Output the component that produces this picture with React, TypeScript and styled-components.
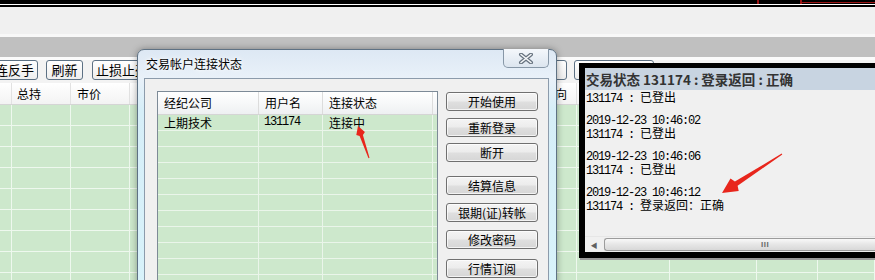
import * as React from 'react';
import styled, {createGlobalStyle} from 'styled-components';

const GlobalStyle = createGlobalStyle`
    html, body {
        margin: 0;
        padding: 0;
        background: #cde8cc;
    }
    body {
        width: 875px;
        height: 280px;
        overflow: hidden;
        font-family: "Noto Sans CJK SC", "Noto Sans", sans-serif;
        color: #000;
    }
`;

const Screen = styled.div`
    position: relative;
    width: 875px;
    height: 280px;
    overflow: hidden;
    display: flex;
    flex-direction: column;
    background: #cde8cc;
`;

const TopBand = styled.div`
    flex: none;
    height: 7px;
    background:
        linear-gradient(#9b1414, #9b1414) 757px 0 / 2px 4px no-repeat,
        linear-gradient(#9b1414, #9b1414) 800px 0 / 2px 4px no-repeat,
        linear-gradient(#9b1414, #9b1414) 800px 2px / 75px 1px no-repeat,
        linear-gradient(to bottom, #000 0 4px, #fff 4px 5px, #000 5px 7px);
`;

const MenuStrip = styled.div`
    flex: none;
    height: 27px;
    background: #f0f0f0;
    border-bottom: 3px solid #f8f8f8;
`;

const GrayBand = styled.div`
    flex: none;
    height: 20px;
    background: #c0c0c0;
`;

const MainWindow = styled.div`
    flex: 1;
    display: flex;
    flex-direction: column;
    overflow: hidden;
`;

const Toolbar = styled.div`
    flex: none;
    height: 26px;
    box-sizing: border-box;
    padding-top: 3px;
    display: flex;
    gap: 8px;
    background: linear-gradient(to bottom, #fbfbfb 0 3px, #f3f3f3 3px);
    overflow: hidden;
`;

const ToolButton = styled.div<{$w: number; $lead?: number}>`
    flex: none;
    width: ${(p) => p.$w}px;
    margin-left: ${(p) => p.$lead ?? 0}px;
    height: 20px;
    box-sizing: border-box;
    border: 1px solid #5d7184;
    border-radius: 3px;
    background: linear-gradient(to bottom, #ffffff, #eeeeee);
    font-size: 13px;
    line-height: 18px;
    text-align: center;
    white-space: nowrap;
    overflow: hidden;
`;

const cols = '12px 59px 59px 70px 70px 70px 70px 70px 73px 24px 93px 87px 61px 1fr';

const HeaderRow = styled.div`
    flex: none;
    display: grid;
    grid-template-columns: ${cols};
    height: 22px;
    box-sizing: border-box;
    background: linear-gradient(to bottom, #ffffff, #f3f3f3);
    border-bottom: 1px solid #d5d5d5;
`;

const HeaderCell = styled.div<{$pad?: number}>`
    border-right: 1px solid #e2e2e2;
    padding-left: ${(p) => p.$pad ?? 5}px;
    font-size: 12px;
    line-height: 21px;
    white-space: nowrap;
    overflow: hidden;
`;

const GridRow = styled.div`
    flex: none;
    display: grid;
    grid-template-columns: ${cols};
    height: 21px;
`;

const GridCell = styled.div`
    border-right: 1px solid #eef8ee;
    border-bottom: 1px solid #eef8ee;
    background: #cde8cc;
`;

/* the account dialog, a window lying on the desktop */
const Dialog = styled.div`
    position: absolute;
    left: 137px;
    top: 49px;
    width: 420px;
    height: 260px;
    box-sizing: border-box;
    border: 1px solid #5f7284;
    border-radius: 7px 7px 0 0;
    background: linear-gradient(to bottom, #dde8f4 0, #e9f1f9 28px, #d6eef8 60px, #d8f3fb 100%);
    box-shadow: 0 0 7px rgba(0, 0, 0, 0.35);
    padding: 0 7px 0 6px;
    display: flex;
    flex-direction: column;
`;

const DialogTitle = styled.div`
    flex: none;
    height: 28px;
    padding-left: 2px;
    font-size: 12px;
    line-height: 28px;
    color: #000;
    text-shadow: 0 0 6px #fff, 0 0 3px #fff;
`;

const CloseButton = styled.div`
    position: absolute;
    top: -1px;
    right: 7px;
    width: 46px;
    height: 19px;
    box-sizing: border-box;
    border: 1px solid #8797a7;
    border-top: none;
    border-radius: 0 0 5px 5px;
    background: linear-gradient(to bottom, #f4f7fb, #dce5ef);
    display: flex;
    align-items: center;
    justify-content: center;
`;

const Client = styled.div`
    flex: 1;
    display: flex;
    gap: 8px;
    box-sizing: border-box;
    background: #f0f0f0;
    border: 1px solid #8c9bab;
    border-bottom: none;
    padding: 12px 11px 0 12px;
`;

const ListView = styled.div`
    flex: none;
    width: 281px;
    box-sizing: border-box;
    border: 1px solid #7d8a97;
    border-bottom: none;
    background: #cde8cc;
    display: flex;
    flex-direction: column;
    overflow: hidden;
`;

const listCols = '101px 64px 110px 1fr';

const ListHeader = styled.div`
    flex: none;
    display: grid;
    grid-template-columns: ${listCols};
    height: 23px;
    box-sizing: border-box;
    background: linear-gradient(to bottom, #ffffff 0, #f7f8f9 50%, #eef0f2 100%);
    border-bottom: 1px solid #d5d5d5;
`;

const ListHeaderCell = styled.div`
    border-right: 1px solid #dcdcdc;
    padding-left: 6px;
    font-size: 12px;
    line-height: 22px;
    white-space: nowrap;
`;

const ListRow = styled.div`
    flex: none;
    display: grid;
    grid-template-columns: ${listCols};
    height: 16px;
`;

const ListCell = styled.div<{$mono?: boolean}>`
    border-right: 1px solid #eaf5ea;
    border-bottom: 1px solid #eaf5ea;
    padding-left: ${(p) => (p.$mono ? 5 : 6)}px;
    font-family: ${(p) => (p.$mono ? '"Liberation Mono", monospace' : '"Noto Sans CJK SC", sans-serif')};
    font-size: 12px;
    letter-spacing: ${(p) => (p.$mono ? '-1.2px' : '0')};
    line-height: 15px;
    white-space: nowrap;
`;

const ButtonColumn = styled.div`
    flex: none;
    width: 92px;
    display: flex;
    flex-direction: column;
`;

const DlgButton = styled.div<{$gap: number}>`
    flex: none;
    margin-top: ${(p) => p.$gap}px;
    height: 19px;
    box-sizing: border-box;
    border: 1px solid #707070;
    border-radius: 3px;
    background: linear-gradient(to bottom, #f4f4f4 0, #ececec 48%, #dfdfdf 52%, #d6d6d6 100%);
    box-shadow: inset 0 0 0 1px rgba(255, 255, 255, 0.7);
    font-size: 12px;
    line-height: 17px;
    text-align: center;
    white-space: nowrap;
`;

/* the trade status window */
const StatusWin = styled.div`
    position: absolute;
    left: 579px;
    top: 63px;
    width: 300px;
    height: 195px;
    box-sizing: border-box;
    border-style: solid;
    border-color: #000;
    border-width: 5px 0 6px 6px;
    box-shadow: 1px 2px 0 #9a9a9a;
    background: #f0f0f0;
    display: flex;
    flex-direction: column;
`;

const StatusTitle = styled.div`
    flex: none;
    height: 22px;
    padding-left: 1px;
    background: #c8d4e1;
    font-size: 13.5px;
    font-weight: bold;
    line-height: 22px;
    color: #333;
    white-space: nowrap;
`;

const StatusBody = styled.div`
    flex: 1;
    padding: 1px 0 0 1px;
    overflow: hidden;
`;

const LogLine = styled.div`
    height: 12px;
    font-family: "Liberation Mono", monospace;
    font-size: 12px;
    letter-spacing: -1.2px;
    line-height: 12px;
    white-space: pre;
`;

const Zh = styled.span`
    font-family: "Noto Sans CJK SC", sans-serif;
    letter-spacing: 0;
    line-height: 12px;
`;

const HScroll = styled.div`
    flex: none;
    height: 16px;
    display: flex;
    background: #f0f0f0;
    border-top: 1px solid #e6e6e6;
    box-sizing: border-box;
`;

const ScrollArrow = styled.div`
    flex: none;
    width: 18px;
    display: flex;
    align-items: center;
    justify-content: center;
    font-size: 7px;
    color: #606060;
`;

const ScrollThumb = styled.div`
    flex: 1;
    margin: 1px 0 1px 1px;
    box-sizing: border-box;
    border: 1px solid #9c9c9c;
    border-right: none;
    border-radius: 3px 0 0 3px;
    background: linear-gradient(to bottom, #f8f8f8, #e6e6e6 50%, #d8d8d8);
    padding-left: 156px;
    display: flex;
    align-items: center;
    font-family: "Liberation Sans", sans-serif;
    font-size: 8px;
    font-weight: bold;
    letter-spacing: 0.5px;
    color: #6a6a6a;
`;

const Overlay = styled.svg`
    position: absolute;
    left: 0;
    top: 0;
    pointer-events: none;
`;

const arrowPoints = (
    x1: number, y1: number, x2: number, y2: number,
    head: number, headW: number, neckW: number, tailW: number
) => {
    const dx = x2 - x1;
    const dy = y2 - y1;
    const len = Math.hypot(dx, dy);
    const ux = dx / len;
    const uy = dy / len;
    const px = -uy;
    const py = ux;
    const bx = x2 - ux * head;
    const by = y2 - uy * head;
    const p = (x: number, y: number) => `${x.toFixed(1)},${y.toFixed(1)}`;
    return [
        p(x1 + (px * tailW) / 2, y1 + (py * tailW) / 2),
        p(bx + (px * neckW) / 2, by + (py * neckW) / 2),
        p(bx + ux * 2 + (px * headW) / 2, by + uy * 2 + (py * headW) / 2),
        p(x2, y2),
        p(bx + ux * 2 - (px * headW) / 2, by + uy * 2 - (py * headW) / 2),
        p(bx - (px * neckW) / 2, by - (py * neckW) / 2),
        p(x1 - (px * tailW) / 2, y1 - (py * tailW) / 2),
    ].join(' ');
};

const headers = ['', '总持', '市价', '', '', '', '', '', '', '向', '', '', '', ''];

// buttons behind the dialog carry no visible label
const toolButtons: Array<{label: string; w: number; lead?: number}> = [
    {label: '连反手', w: 47, lead: -9},
    {label: '刷新', w: 37},
    {label: '止损止盈', w: 60, lead: 1},
    {label: '', w: 80},
    {label: '', w: 80},
    {label: '', w: 80},
    {label: '', w: 70},
    {label: '', w: 65},
    {label: '', w: 80, lead: -1},
];

const dialogButtons = [
    {label: '开始使用', gap: 1},
    {label: '重新登录', gap: 7},
    {label: '断开', gap: 6},
    {label: '结算信息', gap: 14},
    {label: '银期(证)转帐', gap: 8},
    {label: '修改密码', gap: 8},
    {label: '行情订阅', gap: 10},
];

const logLines: Array<[string, string] | null> = [
    ['131174 : ', '已登出'],
    null,
    ['2019-12-23 10:46:02', ''],
    ['131174 : ', '已登出'],
    null,
    ['2019-12-23 10:46:06', ''],
    ['131174 : ', '已登出'],
    null,
    ['2019-12-23 10:46:12', ''],
    ['131174 : ', '登录返回：正确'],
];

const App: React.FC = () => {
    return (
        <Screen>
            <GlobalStyle />
            <TopBand />
            <MenuStrip />
            <GrayBand />
            <MainWindow>
                <Toolbar>
                    {toolButtons.map((b, i) => (
                        <ToolButton key={i} $w={b.w} $lead={b.lead}>
                            {b.label}
                        </ToolButton>
                    ))}
                </Toolbar>
                <HeaderRow>
                    {headers.map((h, i) => (
                        <HeaderCell key={i} $pad={i === 9 ? 2 : i === 2 ? 6 : 5}>
                            {h}
                        </HeaderCell>
                    ))}
                </HeaderRow>
                {Array.from({length: 9}).map((_, r) => (
                    <GridRow key={r}>
                        {headers.map((_, c) => (
                            <GridCell key={c} />
                        ))}
                    </GridRow>
                ))}
            </MainWindow>

            <Dialog>
                <DialogTitle>交易帐户连接状态</DialogTitle>
                <CloseButton>
                    <svg width="16" height="11" viewBox="0 0 16 11">
                        <path d="M3 1.5 L13 9.5 M13 1.5 L3 9.5" stroke="#66727f" strokeWidth="4" strokeLinecap="round" />
                        <path d="M3 1.5 L13 9.5 M13 1.5 L3 9.5" stroke="#f6f8fa" strokeWidth="1.6" strokeLinecap="round" />
                    </svg>
                </CloseButton>
                <Client>
                    <ListView>
                        <ListHeader>
                            <ListHeaderCell>经纪公司</ListHeaderCell>
                            <ListHeaderCell>用户名</ListHeaderCell>
                            <ListHeaderCell>连接状态</ListHeaderCell>
                            <ListHeaderCell />
                        </ListHeader>
                        {Array.from({length: 11}).map((_, r) => (
                            <ListRow key={r}>
                                <ListCell>{r === 0 ? '上期技术' : ''}</ListCell>
                                <ListCell $mono>{r === 0 ? '131174' : ''}</ListCell>
                                <ListCell>{r === 0 ? '连接中' : ''}</ListCell>
                                <ListCell />
                            </ListRow>
                        ))}
                    </ListView>
                    <ButtonColumn>
                        {dialogButtons.map((b) => (
                            <DlgButton key={b.label} $gap={b.gap}>
                                {b.label}
                            </DlgButton>
                        ))}
                    </ButtonColumn>
                </Client>
            </Dialog>

            <StatusWin>
                <StatusTitle>交易状态 131174 : 登录返回 : 正确</StatusTitle>
                <StatusBody>
                    {logLines.map((l, i) => (
                        <LogLine key={i}>
                            {l ? (
                                <>
                                    {l[0]}
                                    {l[1] && <Zh>{l[1]}</Zh>}
                                </>
                            ) : (
                                ' '
                            )}
                        </LogLine>
                    ))}
                </StatusBody>
                <HScroll>
                    <ScrollArrow>◀</ScrollArrow>
                    <ScrollThumb>III</ScrollThumb>
                </HScroll>
            </StatusWin>

            <Overlay width="875" height="280" viewBox="0 0 875 280">
                <polygon points={arrowPoints(369, 158, 358, 126, 10, 9, 3.5, 1)} fill="#e8261c" />
                <polygon points={arrowPoints(782, 154, 722, 193, 17, 15, 5, 1)} fill="#e8261c" />
            </Overlay>
        </Screen>
    );
};

export default App;
